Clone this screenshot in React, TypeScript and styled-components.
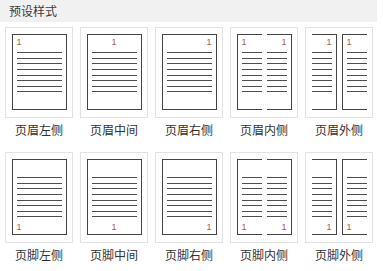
import React from 'react';
import styled, { createGlobalStyle } from 'styled-components';

type Align = 'left' | 'center' | 'right';
type Pos = 'top' | 'bottom';

interface SheetSpec {
  align: Align;
  left?: boolean;
  right?: boolean;
}

interface Preset {
  label: string;
  pos: Pos;
  sheets: SheetSpec[];
}

const presets: Preset[] = [
  { label: '页眉左侧', pos: 'top', sheets: [{ align: 'left', left: true, right: true }] },
  { label: '页眉中间', pos: 'top', sheets: [{ align: 'center', left: true, right: true }] },
  { label: '页眉右侧', pos: 'top', sheets: [{ align: 'right', left: true, right: true }] },
  { label: '页眉内侧', pos: 'top', sheets: [{ align: 'left', left: true }, { align: 'right', right: true }] },
  { label: '页眉外侧', pos: 'top', sheets: [{ align: 'right', right: true }, { align: 'left', left: true }] },
  { label: '页脚左侧', pos: 'bottom', sheets: [{ align: 'left', left: true, right: true }] },
  { label: '页脚中间', pos: 'bottom', sheets: [{ align: 'center', left: true, right: true }] },
  { label: '页脚右侧', pos: 'bottom', sheets: [{ align: 'right', left: true, right: true }] },
  { label: '页脚内侧', pos: 'bottom', sheets: [{ align: 'left', left: true }, { align: 'right', right: true }] },
  { label: '页脚外侧', pos: 'bottom', sheets: [{ align: 'right', right: true }, { align: 'left', left: true }] },
];

const GlobalStyle = createGlobalStyle`
  body {
    margin: 0;
    background: #fff;
    font-family: "Noto Sans CJK SC", "Noto Sans", sans-serif;
  }
`;

const Panel = styled.div`
  width: 383px;
  height: 271px;
  overflow: hidden;
`;

const Header = styled.div`
  width: 368px;
  height: 22px;
  line-height: 21px;
  padding-left: 9px;
  background: #f1f1f1;
  color: #3a3a3a;
  font-size: 12px;
`;

const Grid = styled.div`
  display: grid;
  grid-template-columns: repeat(5, 68px);
  column-gap: 7px;
  row-gap: 10px;
  padding: 5px 0 0 5px;
`;

const Item = styled.div`
  display: flex;
  flex-direction: column;
`;

const Card = styled.div`
  box-sizing: border-box;
  height: 91px;
  border: 1px solid #e2e2e2;
  background: #fff;
  display: flex;
  justify-content: center;
  align-items: center;
  gap: 5px;
  padding-bottom: 1px;
`;

const Sheet = styled.div<{ $left?: boolean; $right?: boolean; $wide: boolean }>`
  box-sizing: border-box;
  width: ${(p) => (p.$wide ? 55 : 25)}px;
  height: 76px;
  border-top: 1px solid #444;
  border-bottom: 1px solid #444;
  border-left: ${(p) => (p.$left ? '1px solid #444' : 'none')};
  border-right: ${(p) => (p.$right ? '1px solid #444' : 'none')};
  padding-left: ${(p) => (p.$left ? 4 : 0)}px;
  padding-right: ${(p) => (p.$right ? 4 : 0)}px;
  display: flex;
  flex-direction: column;
`;

const NumRow = styled.div<{ $align: Align; $pos: Pos }>`
  ${(p) => (p.$pos === 'top' ? 'height: 17px; padding-top: 2px;' : 'flex: 1; padding-bottom: 1px;')}
  box-sizing: border-box;
  display: flex;
  align-items: ${(p) => (p.$pos === 'top' ? 'flex-start' : 'flex-end')};
  justify-content: ${(p) =>
    p.$align === 'left' ? 'flex-start' : p.$align === 'right' ? 'flex-end' : 'center'};
  font-family: "Liberation Sans", Arial, sans-serif;
  font-size: 9px;
  line-height: 11px;
  color: #a65a50;
`;

const Lines = styled.div<{ $pos: Pos }>`
  display: flex;
  flex-direction: column;
  gap: 4.65px;
  margin-top: ${(p) => (p.$pos === 'bottom' ? 17 : 0)}px;
`;

const Line = styled.div`
  height: 1px;
  background: #4d4d4d;
`;

const Label = styled.div`
  height: 24px;
  line-height: 24px;
  text-align: center;
  font-size: 12px;
  color: #333;
`;

const Page = ({ pos, spec, wide }: { pos: Pos; spec: SheetSpec; wide: boolean }) => {
  const num = <NumRow $align={spec.align} $pos={pos}>1</NumRow>;
  return (
    <Sheet $left={spec.left} $right={spec.right} $wide={wide}>
      {pos === 'top' && num}
      <Lines $pos={pos}>
        {Array.from({ length: 8 }).map((_, i) => (
          <Line key={i} />
        ))}
      </Lines>
      {pos === 'bottom' && num}
    </Sheet>
  );
};

const App = () => {
  return (
    <Panel>
      <GlobalStyle />
      <Header>预设样式</Header>
      <Grid>
        {presets.map((p) => (
          <Item key={p.label}>
            <Card>
              {p.sheets.map((s, i) => (
                <Page key={i} pos={p.pos} spec={s} wide={p.sheets.length === 1} />
              ))}
            </Card>
            <Label>{p.label}</Label>
          </Item>
        ))}
      </Grid>
    </Panel>
  );
};

export default App;
